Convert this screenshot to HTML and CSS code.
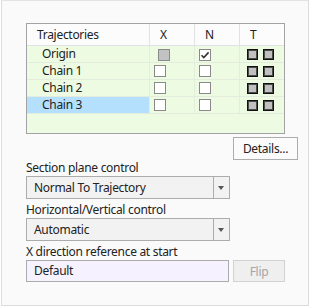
FILE: index.html
```html
<!DOCTYPE html>
<html lang="en">
<head>
    <meta charset="UTF-8">
    <title>Sweep Options</title>
    <link rel="stylesheet" href="styles.css">
</head>
<body>
    <div class="panel">
        <div class="traj-table">
            <div class="row head">
                <div class="cell name">Trajectories</div>
                <div class="cell">X</div>
                <div class="cell">N</div>
                <div class="cell">T</div>
            </div>
            <div class="row">
                <div class="cell name">Origin</div>
                <div class="cell"><span class="chk gray"></span></div>
                <div class="cell"><span class="chk on">
                    <svg width="10" height="10" viewBox="0 0 10 10"><path d="M1.5 5.2 L3.8 7.5 L8.6 2.4" fill="none" stroke="#333" stroke-width="1.6"/></svg>
                </span></div>
                <div class="cell t"><span class="sq"></span><span class="sq"></span></div>
            </div>
            <div class="row">
                <div class="cell name">Chain 1</div>
                <div class="cell"><span class="chk"></span></div>
                <div class="cell"><span class="chk"></span></div>
                <div class="cell t"><span class="sq"></span><span class="sq"></span></div>
            </div>
            <div class="row">
                <div class="cell name">Chain 2</div>
                <div class="cell"><span class="chk"></span></div>
                <div class="cell"><span class="chk"></span></div>
                <div class="cell t"><span class="sq"></span><span class="sq"></span></div>
            </div>
            <div class="row">
                <div class="cell name selected">Chain 3</div>
                <div class="cell"><span class="chk"></span></div>
                <div class="cell"><span class="chk"></span></div>
                <div class="cell t"><span class="sq"></span><span class="sq"></span></div>
            </div>
        </div>

        <div class="details-line">
            <button class="btn">Details...</button>
        </div>

        <div class="label first">Section plane control</div>
        <div class="select">
            <span class="value">Normal To Trajectory</span>
            <span class="arrow"></span>
        </div>

        <div class="label">Horizontal/Vertical control</div>
        <div class="select">
            <span class="value">Automatic</span>
            <span class="arrow"></span>
        </div>

        <div class="label">X direction reference at start</div>
        <div class="ref-line">
            <div class="ref-input">Default</div>
            <button class="btn flip" disabled>Flip</button>
        </div>
    </div>
</body>
</html>
```

FILE: styles.css
```css
body {
    margin: 0;
    background: #ffffff;
    font-family: 'Noto Sans', 'Open Sans', sans-serif;
    font-size: 12px;
    letter-spacing: -0.3px;
    color: #222;
}

.panel {
    margin-left: 1px;
    width: 306px;
    height: 304px;
    box-sizing: content-box;
    border: 1px solid #dcdcdc;
    border-top-color: #e4e4e4;
    background: #fafafa;
    padding: 0;
    position: relative;
}

.traj-table {
    margin: 22px 0 0 24px;
    width: 257px;
    height: 109px;
    border: 1px solid #a3a3a3;
    background: #edfbe2;
}

.row {
    display: grid;
    grid-template-columns: 123px 45px 45px 44px;
    height: 16px;
    border-bottom: 1px solid #e3ecdd;
}

.row.head {
    height: 21px;
    background: #fcfcfc;
    border-bottom: 1px solid #e2e2e2;
}

.cell {
    display: flex;
    align-items: center;
    padding-left: 4px;
    border-right: 1px solid #e3ecdd;
    line-height: 16px;
}

.head .cell {
    padding-left: 10px;
    border-right-color: #e2e2e2;
}

.head .cell.name {
    padding-left: 10px;
}

.cell:last-child {
    border-right: none;
}

.cell.name {
    padding-left: 15px;
}

.cell.selected {
    background: #b4e0fe;
}

.chk {
    width: 10px;
    height: 10px;
    border: 1px solid #8a8a8a;
    background: #ffffff;
    display: flex;
    align-items: center;
    justify-content: center;
}

.chk.gray {
    background: #c2c2c2;
    margin-left: 4px;
    margin-top: 2px;
}

.chk.on {
    margin-top: 2px;
}

.cell.t {
    padding-left: 7px;
    gap: 5px;
}

.sq {
    width: 9px;
    height: 9px;
    border: 1px solid #111;
    box-shadow: inset 0 0 0 1px #4a4a4a;
    background: #c0c0c0;
}

.details-line {
    display: flex;
    justify-content: flex-end;
    padding-right: 10px;
    margin-top: 3px;
}

.btn {
    font-family: inherit;
    font-size: 12px;
    letter-spacing: -0.3px;
    color: #222;
    background: #fbfbfb;
    border: 1px solid #adadad;
    height: 23px;
    padding: 0;
    width: 65px;
    margin: 0;
}

.label {
    margin-left: 24px;
    line-height: 16px;
    height: 16px;
    margin-top: 3px;
}

.label.first {
    margin-top: 0;
}

.select {
    margin-left: 24px;
    width: 202px;
    height: 21px;
    border: 1px solid #acacac;
    background: #f2f2f2;
    display: flex;
    align-items: center;
    position: relative;
}

.select .value {
    padding-left: 7px;
    flex: 1;
}

.select .arrow {
    width: 15px;
    height: 21px;
    border-left: 1px solid #acacac;
    position: relative;
}

.select .arrow::after {
    content: "";
    position: absolute;
    left: 4px;
    top: 9px;
    border-left: 3.5px solid transparent;
    border-right: 3.5px solid transparent;
    border-top: 4px solid #555;
}

.ref-line {
    display: flex;
    gap: 4px;
    margin-left: 24px;
}

.ref-input {
    width: 194px;
    height: 20px;
    line-height: 20px;
    padding-left: 7px;
    border: 1px solid #acacac;
    background: #f5f1ff;
}

.btn.flip {
    width: 52px;
    height: 22px;
    background: #efefef;
    border-color: #d2d2d2;
    color: #a6a6a6;
}
```
